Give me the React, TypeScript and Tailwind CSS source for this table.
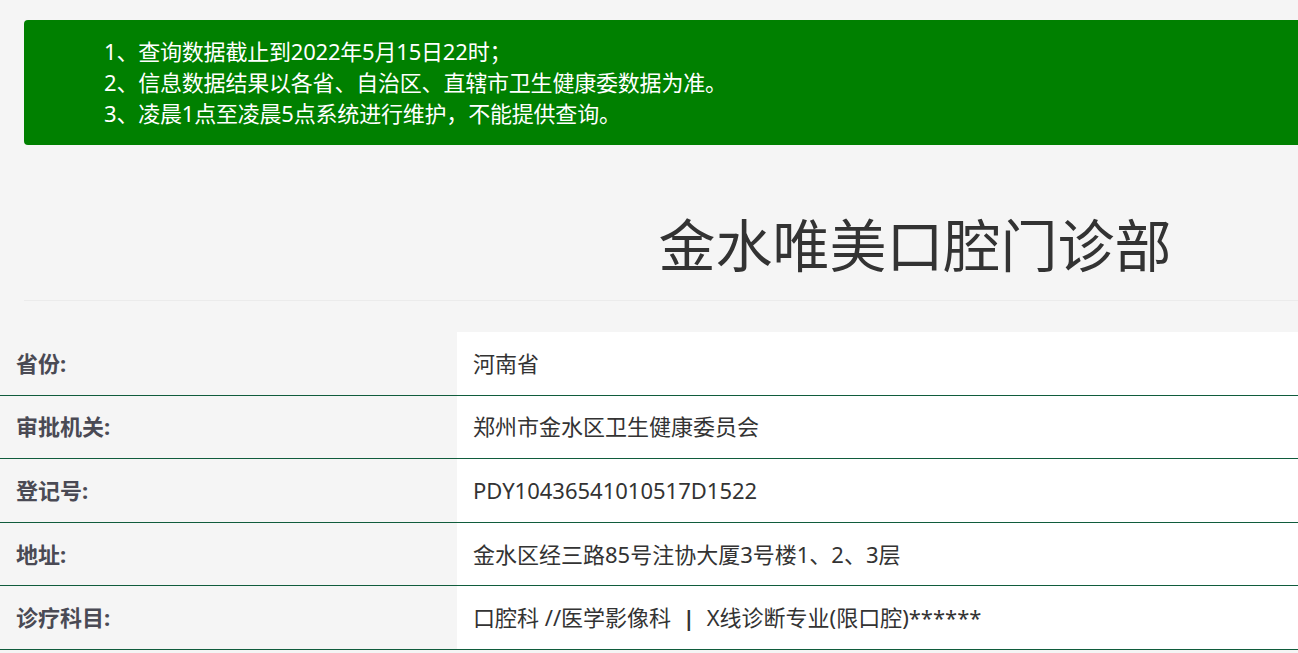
const rows = [
  { label: "省份:", value: "河南省" },
  { label: "审批机关:", value: "郑州市金水区卫生健康委员会" },
  { label: "登记号:", value: "PDY10436541010517D1522" },
  { label: "地址:", value: "金水区经三路85号注协大厦3号楼1、2、3层" },
]

export default function App() {
  return (
    <div
      className="min-h-screen w-full overflow-hidden bg-[#f5f5f5] text-[#333]"
      style={{ fontFamily: '"Noto Sans", "Noto Sans CJK SC", sans-serif' }}
    >
      <div className="w-[1830px] pt-5">
        {/* notice */}
        <div className="mx-6 rounded bg-[#008000] py-4 pl-20 text-[22px] leading-[31px] tracking-[-0.2px] text-white">
          <p>1、查询数据截止到2022年5月15日22时；</p>
          <p>2、信息数据结果以各省、自治区、直辖市卫生健康委数据为准。</p>
          <p>3、凌晨1点至凌晨5点系统进行维护，不能提供查询。</p>
        </div>

        {/* title */}
        <div className="mx-6 border-b border-[#ebebeb] pt-[58px] pb-[13px] text-center">
          <h1 className="text-[57px] font-normal leading-[84px] text-[#333]">金水唯美口腔门诊部</h1>
        </div>

        {/* info table */}
        <div className="mt-[31px] text-[22px]">
          {rows.map((r) => (
            <div key={r.label} className="flex h-[63.6px] border-b border-[#105c3c]">
              <div className="flex w-[457px] items-center pl-4 font-bold text-[#4a4a54]">{r.label}</div>
              <div className="flex flex-1 items-center bg-white pl-4">{r.value}</div>
            </div>
          ))}
          <div className="flex h-[63.6px] border-b border-[#105c3c]">
            <div className="flex w-[457px] items-center pl-4 font-bold text-[#4a4a54]">诊疗科目:</div>
            <div className="flex flex-1 items-center bg-white pl-4 whitespace-pre">
              口腔科 //医学影像科 <span className="mx-1.5 font-bold">|</span> X线诊断专业(限口腔)******
            </div>
          </div>
        </div>
      </div>
    </div>
  )
}
